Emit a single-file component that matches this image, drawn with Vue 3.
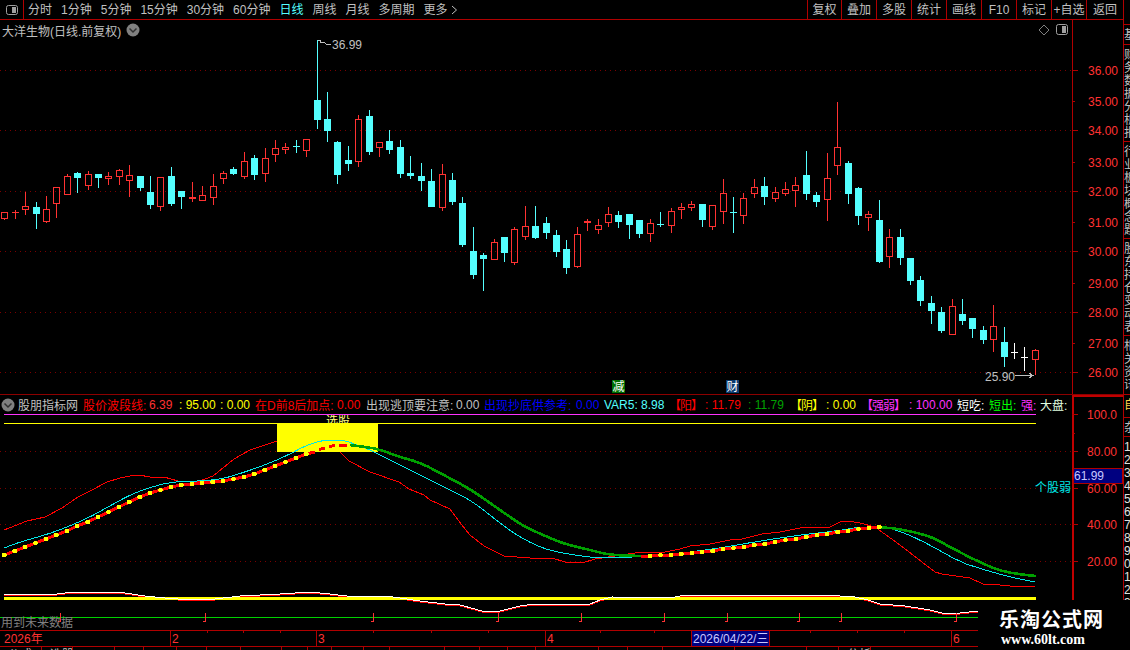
<template>
  <div class="terminal">
    <div class="main-col">
      <!-- top toolbar -->
      <div class="toolbar">
        <div class="panel-btn">
          <svg width="14" height="12" viewBox="0 0 14 12"><rect x="1.5" y="1.5" width="11" height="9" rx="2" class="ico-box" /><rect x="7" y="3" width="4" height="6" class="ico-fill" /></svg>
        </div>
        <div class="periods">
          <span v-for="p in periods" :key="p" :class="{ active: p === '日线' }">{{ p }}</span>
          <span class="more">更多
            <svg width="7" height="10" viewBox="0 0 7 10"><path d="M1 1 L5.5 5 L1 9" class="chev" /></svg>
          </span>
        </div>
        <div class="tools">
          <span v-for="t in tools" :key="t" class="tool">{{ t }}</span>
        </div>
      </div>

      <!-- kline pane -->
      <div class="pane pane-main">
        <div class="chart-wrap">
          <svg class="chart" width="1072" height="374" viewBox="0 20 1072 374">
            <line v-for="y in mainGrid" :key="y" x1="0" x2="1072" :y1="y + 0.5" :y2="y + 0.5" class="grid" />
            <template v-for="c in candles" :key="c.i">
              <path :d="c.wick" :class="'wick-' + c.type" />
              <rect v-if="c.kind === 'solid'" :x="c.x - 3" :y="c.top" width="7" :height="c.h" class="body-c" />
              <rect v-if="c.kind === 'hollow'" :x="c.x - 2.5" :y="c.top + 0.5" width="6" :height="c.h" class="body-r" />
            </template>
            <path d="M317.5 40 H320 M320 40 V43 M320 42.5 H324 L327 44.5 H331" class="note-line" />
            <text x="332" y="49" class="note">36.99</text>
            <text x="985" y="381" class="note">25.90</text>
            <path d="M1015 375.5 H1033 M1029 373 L1033 375.5 L1029 378" class="note-line" />
            <rect x="612" y="380" width="13" height="13" class="tag-green" />
            <text x="612.5" y="391" class="tag-text">减</text>
            <rect x="726" y="380" width="13" height="13" class="tag-navy" />
            <text x="726.5" y="391" class="tag-text">财</text>
          </svg>
          <div class="title-row">
            <span>大洋生物(日线.前复权)</span>
            <svg width="14" height="14" viewBox="0 0 14 14"><circle cx="7" cy="7" r="6.5" class="round" /><path d="M3.5 5.5 L7 9 L10.5 5.5" class="round-chev" /></svg>
          </div>
          <div class="corner-icons">
            <svg width="12" height="12" viewBox="0 0 12 12"><path d="M6 1 L11 6 L6 11 L1 6 Z" class="diamond" /></svg>
            <svg width="13" height="12" viewBox="0 0 13 12"><rect x="0.5" y="0.5" width="11" height="10" rx="2" class="ico-box" /><rect x="6" y="2" width="4" height="7" class="ico-fill" /></svg>
          </div>
        </div>
        <svg class="axis" width="51" height="374" viewBox="0 20 51 374">
          <line x1="0.5" x2="0.5" y1="20" y2="394" class="axis-line" />
          <template v-for="(l, n) in mainAxis" :key="l.t">
            <line x1="0" :x2="n % 2 === 0 ? 6 : 3" :y1="l.y + 0.5" :y2="l.y + 0.5" class="axis-line" />
            <text x="16" :y="l.y + 5" class="axis-text">{{ l.t }}</text>
          </template>
        </svg>
      </div>

      <!-- indicator pane -->
      <div class="pane pane-sub">
        <div class="sub-left">
          <div class="sub-head">
            <svg class="head-ico" width="14" height="14" viewBox="0 0 14 14"><circle cx="7" cy="7" r="6.5" class="round" /><path d="M3.5 5.5 L7 9 L10.5 5.5" class="round-chev" /></svg>
            <span v-for="(f, n) in fields" :key="n" :class="f.c" :style="{ width: f.w + 'px' }">{{ f.t }}</span>
          </div>
          <svg class="chart" width="1072" height="216" viewBox="0 414 1072 216">
            <clipPath id="pickClip"><rect x="300" y="415" width="80" height="8" /></clipPath>
            <line v-for="y in subGrid" :key="y" x1="0" x2="1072" :y1="y + 0.5" :y2="y + 0.5" class="grid" />
            <polyline :points="thinRed" class="thin-red" />
            <line x1="4" x2="1036" y1="414.5" y2="414.5" class="ln-magenta" />
            <line x1="4" x2="1036" y1="423.5" y2="423.5" class="ln-yellow" />
            <text x="326" y="425" class="pick-text" clip-path="url(#pickClip)">选股</text>
            <rect x="277" y="423" width="101" height="29" class="block-yellow" />
            <polyline :points="cyanLine" class="thin-cyan" />
            <polyline :points="greenA" class="thick-green" />
            <polyline :points="greenB" class="thick-green" />
            <polyline :points="redA" class="thick-red" />
            <polyline :points="redB" class="thick-red" />
            <path d="M319 449.5 L325 448 M329 446.5 L335 445.5 M339 445 H347" class="thick-red" />
            <circle v-for="d in dots" :key="d[0]" :cx="d[0]" :cy="d[1]" r="2.4" class="dot" />
            <polyline :points="waveShadow" class="wave-red" />
            <line x1="4" x2="1036" y1="598" y2="598" class="ln-yellow-thick" />
            <polyline :points="wave" class="wave-white" />
            <line x1="0" x2="978" y1="617.5" y2="617.5" class="ln-green" />
            <path v-for="m in marks" :key="m" :d="'M' + m + '.5 613 V621 H' + (m - 2)" class="mark" />
            <text x="1" y="627" class="future">用到未来数据</text>
          </svg>
        </div>
        <svg class="axis" width="51" height="235" viewBox="0 395 51 235">
          <rect x="0" y="395" width="2" height="235" class="axis-fill" />
          <rect x="0" y="395" width="51" height="2" class="axis-fill" />
          <line x1="0" x2="3" y1="433.5" y2="433.5" class="axis-line" />
          <template v-for="l in subAxis" :key="l.t">
            <line x1="0" x2="6" :y1="l.y + 0.5" :y2="l.y + 0.5" class="axis-line" />
            <text x="15" :y="l.y + 5" class="axis-text">{{ l.t }}</text>
          </template>
          <rect x="1.5" y="468.5" width="49" height="15" class="value-box" />
          <text x="2" y="480" class="value-text">61.99</text>
        </svg>
        <span class="weak-tag">个股弱</span>
      </div>

      <!-- date strip -->
      <svg class="dates" width="1123" height="17" viewBox="0 630 1123 17">
        <line x1="0" x2="1123" y1="630.5" y2="630.5" class="axis-line" />
        <line x1="0" x2="1123" y1="646.5" y2="646.5" class="axis-line" />
        <line v-for="t in dateTicks" :key="t" :x1="t + 0.5" :x2="t + 0.5" y1="630" y2="633" class="axis-line" />
        <text x="4" y="643" class="axis-text">2026年</text>
        <template v-for="m in months" :key="m.t">
          <line :x1="m.x + 0.5" :x2="m.x + 0.5" y1="630" y2="646" class="axis-line" />
          <text :x="m.x + 2" y="643" class="axis-text">{{ m.t }}</text>
        </template>
        <rect x="691.5" y="630.5" width="78" height="16" class="value-box" />
        <text x="693" y="643" class="value-text">2026/04/22/三</text>
      </svg>

      <!-- bottom tabs, cut by the window -->
      <div class="tabs">
        <span v-for="(t, n) in tabs" :key="n" class="tab" :style="{ width: t.w + 'px' }">{{ t.t }}</span>
      </div>
    </div>

    <!-- clipped side strip -->
    <div class="side">
      <div v-for="(s, n) in sideCells" :key="n" class="side-cell" :class="s.c" :style="{ height: s.h + 'px' }">
        <div class="side-text">{{ s.t }}</div>
      </div>
    </div>

    <div class="watermark">
      <div class="wm-cn">乐淘公式网</div>
      <div class="wm-en">www.60lt.com</div>
    </div>
  </div>
</template>

<script setup>
const periods = ['分时', '1分钟', '5分钟', '15分钟', '30分钟', '60分钟', '日线', '周线', '月线', '多周期']
const tools = ['复权', '叠加', '多股', '统计', '画线', 'F10', '标记', '+自选', '返回']

const mainGrid = [70, 130, 191, 251, 312, 372]
const subGrid = [451, 488, 524, 561]
const mainAxis = [
  { t: '36.00', y: 70 }, { t: '35.00', y: 101 }, { t: '34.00', y: 130 }, { t: '33.00', y: 162 },
  { t: '32.00', y: 191 }, { t: '31.00', y: 222 }, { t: '30.00', y: 251 }, { t: '29.00', y: 283 },
  { t: '28.00', y: 312 }, { t: '27.00', y: 343 }, { t: '26.00', y: 372 }
]
const subAxis = [
  { t: '100.0', y: 414 }, { t: '80.00', y: 451 }, { t: '60.00', y: 488 },
  { t: '40.00', y: 524 }, { t: '20.00', y: 561 }
]

// type, wick top, body top, body bottom, wick bottom
const raw = [
  ['r',212,212,219,220],['r',210,212,213,219],['r',192,206,210,215],['c',202,207,214,229],['r',196,209,222,223],
  ['r',187,187,204,218],['r',174,176,195,195],['c',172,173,178,193],['r',171,174,186,190],['c',174,174,178,188],
  ['r',172,176,179,185],['r',169,170,177,185],['r',165,175,181,197],['c',176,176,188,191],['c',176,192,205,209],
  ['r',177,177,207,211],['c',167,176,204,206],['c',191,191,197,209],['r',182,197,199,202],['r',186,195,201,201],
  ['r',174,186,198,205],['r',171,173,179,184],['c',167,169,174,175],['r',152,161,177,179],['c',155,158,175,180],
  ['r',148,158,174,182],['r',140,148,155,162],['r',143,147,150,154],['c',140,146,147,153],['r',139,139,151,157],
  ['c',40,100,120,129],['c',92,119,131,142],['c',141,142,175,184],['c',146,160,164,171],['r',115,119,162,167],
  ['c',110,116,152,155],['r',142,142,148,157],['c',130,141,150,154],['c',140,147,174,178],['c',156,173,176,179],
  ['c',163,176,181,191],['c',169,181,207,207],['r',164,174,208,211],['c',173,180,202,205],['c',197,203,245,247],
  ['c',227,251,275,279],['c',253,255,259,291],['r',239,242,260,260],['c',237,237,253,262],['r',227,229,263,265],
  ['r',206,226,237,240],['c',206,226,238,239],['c',217,223,233,239],['c',230,235,252,257],['c',240,249,268,274],
  ['r',227,234,267,268],['r',219,221,223,231],['r',219,225,230,234],['r',207,214,223,227],['c',211,215,222,228],
  ['c',214,214,225,239],['c',220,220,234,238],['r',219,223,234,242],['c',212,224,225,227],['r',208,211,226,233],
  ['r',203,207,210,219],['r',201,204,208,211],['c',204,204,220,227],['r',205,205,227,230],['r',179,193,212,224],
  ['c',197,212,213,233],['r',193,198,216,224],['r',179,187,194,198],['c',177,186,197,205],['r',187,192,199,202],
  ['r',182,189,194,196],['r',177,185,191,207],['c',151,175,194,200],['c',192,195,202,207],['r',153,178,200,221],
  ['r',102,147,166,175],['c',161,163,194,204],['c',187,188,216,225],['r',211,214,218,231],['c',200,220,262,263],
  ['r',229,237,257,268],['c',229,237,258,265],['c',258,258,281,285],['c',276,280,301,306],['c',296,303,311,324],
  ['c',307,312,331,333],['r',299,306,335,335],['c',299,314,321,325],['c',318,318,329,338],['c',326,330,340,344],
  ['r',305,326,340,352],['c',327,342,357,367],['w',343,352,353,359],['w',347,357,358,371],['r',349,350,360,375]
]

const barX = (i) => 4.3 + 10.417 * i

const candles = raw.map(([type, wt, bt, bb, wb], i) => {
  const x = Math.round(4.3 + 10.41 * i)
  const doji = bb - bt <= 1
  let wick = `M${x + 0.5} ${wt} V${bt} M${x + 0.5} ${bb} V${wb}`
  if (doji) wick = `M${x + 0.5} ${wt} V${wb} M${x - 3} ${bt + 0.5} H${x + 4}`
  let kind = 'none'
  if (!doji) kind = type === 'c' ? 'solid' : 'hollow'
  return { i, x, type, wick, kind, top: bt, h: kind === 'solid' ? bb - bt : bb - bt - 1 }
})

const pts = (list) => list.map((p) => p.join(',')).join(' ')

// corner cutting, the hand-read points are sparse
const smooth = (list, rounds = 2) => {
  let cur = list
  for (let r = 0; r < rounds; r++) {
    const next = [cur[0]]
    for (let i = 0; i < cur.length - 1; i++) {
      const [ax, ay] = cur[i]
      const [bx, by] = cur[i + 1]
      next.push([ax * 0.75 + bx * 0.25, ay * 0.75 + by * 0.25])
      next.push([ax * 0.25 + bx * 0.75, ay * 0.25 + by * 0.75])
    }
    next.push(cur[cur.length - 1])
    cur = next
  }
  return cur
}

const thinRed = pts([
  [4,530],[27,521],[45,517],[62,508],[78,497],[92,490],[107,482],[120,478],[130,476],[139,475],[150,477],[164,477],
  [178,481],[200,481],[213,476],[234,459],[250,450],[277,441],[300,436],[325,438],[340,452],[349,461],[370,472],
  [399,482],[409,489],[424,495],[430,500],[450,509],[461,524],[470,535],[484,546],[504,556],[530,558],[552,558],
  [565,562],[582,563],[595,559],[615,556],[635,553],[665,552],[680,549],[690,546],[710,544],[730,540],[742,539],
  [762,534],[780,532],[800,528],[830,527],[840,522],[848,521],[860,523],[875,527],[900,545],[922,562],[935,572],
  [942,574],[970,578],[983,584],[1000,585],[1020,587],[1035,586]
])
const cyanLine = pts(smooth([
  [4,548],[20,542],[45,535],[65,528],[90,517],[108,507],[128,496],[145,489],[170,482],[200,481],[222,479],[245,472],
  [270,463],[290,454],[305,446],[320,441],[330,440],[343,440],[360,446],[370,450],[400,465],[430,480],[450,490],
  [472,501],[500,523],[515,534],[535,545],[552,551],[580,556],[600,558],[635,557],[670,555],[690,552],[720,548],
  [760,541],[800,535],[836,531],[860,527],[885,527],[905,533],[930,545],[960,562],[985,570],[1010,577],[1035,582]
], 1))

const dotsA = [
  405,393,381,369,357,345,333,318,306,291,276,261,246,231,219,210,201,195,192,189,186,183,177,171,162,150,138,126,114,102
].map((py, i) => [barX(i), 420 + py / 3])
const dotsB = [
  378,375,375,372,369,366,363,357,354,351,345,342,336,330,327,321,315,312,306,303,297,294,291
].map((py, i) => [barX(i + 62), 430 + py / 3])

const dots = [...dotsA, ...dotsB]
const redA = pts([...dotsA, [315, 452]])
const redB = pts([[641, 556], ...dotsB])
const greenA = pts(smooth([
  [350,445],[365,447],[378,449],[400,457],[421,463],[440,473],[470,489],[490,503],[510,517],[525,527],[550,538],
  [565,544],[590,550],[610,555],[641,556]
]))
const greenB = pts(smooth([
  [879,527],[900,529],[930,536],[950,547],[975,560],[1000,571],[1025,575],[1036,576]
]))

const waveList = [
  [4,594],[30,594],[50,595],[72,592],[105,592],[125,593],[145,596],[165,598],[190,600],[215,599],[240,596],[280,594],
  [310,592],[330,594],[355,597],[385,596],[400,598],[420,601],[445,604],[460,605],[475,609],[485,612],[500,611],
  [520,606],[535,604],[565,604],[590,604],[600,600],[612,597],[670,598],[680,596],[695,595],[760,595],[810,595],
  [840,596],[855,597],[868,600],[880,604],[905,606],[930,610],[942,613],[960,613],[978,611]
]
const wave = pts(waveList)
const waveShadow = pts(waveList.map(([x, y]) => [x, y + 1]))

const marks = [60, 205, 373, 498, 581, 664, 727, 799, 841, 956]
const dateTicks = [207, 243, 280, 373, 431, 488, 600, 654, 810, 857, 904]
const months = [{ t: '2', x: 170 }, { t: '3', x: 316 }, { t: '4', x: 545 }, { t: '6', x: 951 }]

const fields = [
  { t: '股朋指标网', w: 65, c: 'gray' },
  { t: '股价波段线:', w: 66, c: 'red' },
  { t: '6.39', w: 30, c: 'soft-red' },
  { t: ': 95.00', w: 41, c: 'yellow' },
  { t: ': 0.00', w: 35, c: 'yellow' },
  { t: '在D前8后加点:', w: 82, c: 'red' },
  { t: '0.00', w: 29, c: 'red' },
  { t: '出现逃顶要注意:', w: 90, c: 'gray' },
  { t: '0.00', w: 28, c: 'gray' },
  { t: '出现抄底供参考:', w: 92, c: 'blue' },
  { t: '0.00', w: 28, c: 'blue' },
  { t: 'VAR5:', w: 37, c: 'cyan' },
  { t: '8.98', w: 32, c: 'cyan' },
  { t: '【阳】', w: 32, c: 'red tight' },
  { t: ': 11.79', w: 43, c: 'red' },
  { t: ': 11.79', w: 46, c: 'green' },
  { t: '【阴】', w: 32, c: 'yellow tight' },
  { t: ': 0.00', w: 39, c: 'yellow' },
  { t: '【强弱】', w: 44, c: 'magenta tight' },
  { t: ': 100.00', w: 48, c: 'magenta' },
  { t: '短吃:', w: 32, c: 'white' },
  { t: '短出:', w: 32, c: 'lime' },
  { t: '强:', w: 19, c: 'magenta' },
  { t: '大盘:', w: 32, c: 'pale' }
]

const tabs = [
  { t: '公式', w: 42 }, { t: '选股', w: 31 }, { t: '', w: 42 }, { t: '', w: 29 }, { t: '', w: 33 }, { t: '', w: 30 },
  { t: '', w: 34 }, { t: '', w: 41 }, { t: '', w: 26 }, { t: '', w: 24 }, { t: '', w: 32 }, { t: '', w: 26 },
  { t: '', w: 55 }, { t: '', w: 35 }, { t: '', w: 28 }, { t: '', w: 28 }, { t: '', w: 63 }, { t: '', w: 29 },
  { t: '', w: 35 }, { t: '', w: 72 }, { t: '', w: 72 }, { t: '', w: 32 }, { t: '分析', w: 32 }
]

const sideCells = [
  { h: 25, t: '' },
  { h: 20, t: '基' },
  { h: 97, t: '财务数据分析报' },
  { h: 97, t: '行业板块概念题' },
  { h: 97, t: '股东持仓变动表' },
  { h: 59, t: '相关资讯' },
  { h: 23, t: '自', c: 'amber' },
  { h: 19, t: '杂' },
  { h: 213, t: '1234567890123', c: 'nums' }
]
</script>

<style scoped>
.terminal {
  position: relative;
  display: flex;
  width: 1130px;
  height: 650px;
  overflow: hidden;
  background: #000;
  color: #c0c0c0;
  font-family: "Liberation Sans", "Noto Sans CJK SC", sans-serif;
  font-size: 12px;
}

.main-col {
  display: flex;
  flex-direction: column;
  width: 1123px;
  flex: none;
}

.toolbar {
  display: flex;
  align-items: stretch;
  height: 19px;
  border-bottom: 1px solid #b00000;
  flex: none;
  line-height: 20px;
}

.panel-btn {
  display: flex;
  align-items: center;
  justify-content: center;
  width: 23px;
  border-right: 1px solid #b00000;
}

.ico-box {
  fill: none;
  stroke: #a0a0a0;
}

.ico-fill {
  fill: #a0a0a0;
}

.chev {
  fill: none;
  stroke: #c0c0c0;
}

.periods {
  display: flex;
  gap: 9px;
  padding-left: 4px;
}

.periods .active {
  color: #54ffff;
}

.more {
  display: flex;
  align-items: center;
  gap: 3px;
}

.tools {
  display: flex;
  margin-left: auto;
}

.tool {
  width: 34px;
  border-left: 1px solid #b00000;
  text-align: center;
}

.tool:first-child {
  width: 33px;
}

.tool:last-child {
  width: 36px;
}

.pane {
  display: flex;
  position: relative;
  flex: none;
}

.pane-main {
  height: 374px;
}

.chart-wrap {
  position: relative;
  width: 1072px;
  height: 374px;
}

.chart,
.axis,
.dates {
  display: block;
  flex: none;
  shape-rendering: crispEdges;
}

.title-row {
  position: absolute;
  top: 0;
  left: 2px;
  display: flex;
  align-items: center;
  gap: 5px;
  height: 20px;
}

.corner-icons {
  position: absolute;
  top: 4px;
  right: 3px;
  display: flex;
  align-items: center;
  gap: 6px;
}

.diamond {
  fill: none;
  stroke: #808080;
}

.round {
  fill: #808080;
}

.round-chev {
  fill: none;
  stroke: #303030;
  stroke-width: 1.5;
}

.grid {
  stroke: #7a0000;
  stroke-dasharray: 1 4;
  shape-rendering: auto;
}

.wick-r,
.body-r {
  fill: none;
  stroke: #ff3232;
}

.wick-c {
  fill: none;
  stroke: #54ffff;
}

.wick-w {
  fill: none;
  stroke: #fff;
}

.body-c {
  fill: #54ffff;
}

.note {
  fill: #c0c0c0;
}

.note-line {
  fill: none;
  stroke: #c0c0c0;
}

.tag-green {
  fill: #006e00;
}

.tag-navy {
  fill: #0b3a6e;
}

.tag-text {
  fill: #fff;
}

.axis-line {
  stroke: #b00000;
}

.axis-fill {
  fill: #c00000;
}

.axis-text {
  fill: #ff3232;
}

.value-box {
  fill: #000080;
  stroke: #b00000;
}

.value-text {
  fill: #c8c8ff;
}

.pane-sub {
  height: 236px;
  border-top: 1px solid #8c0000;
  box-sizing: border-box;
}

.sub-left {
  display: flex;
  flex-direction: column;
  width: 1072px;
}

.sub-head {
  display: flex;
  align-items: center;
  height: 19px;
  flex: none;
  padding-left: 1px;
  white-space: nowrap;
  overflow: hidden;
}

.head-ico {
  flex: none;
  margin-right: 3px;
}

.sub-head span {
  flex: none;
}

.sub-head .tight {
  letter-spacing: -1px;
  text-indent: -4px;
}

.gray { color: #c0c0c0; }
.red { color: #ff0000; }
.soft-red { color: #ff3232; }
.yellow { color: #ffff00; }
.blue { color: #0000ff; }
.cyan { color: #54ffff; }
.green { color: #00a000; }
.magenta { color: #ff32ff; }
.white { color: #fff; }
.lime { color: #00ff00; }
.pale { color: #e0ffe0; }

.thin-red {
  fill: none;
  stroke: #ff0000;
}

.thin-cyan {
  fill: none;
  stroke: #00e8e8;
}

.thick-red {
  fill: none;
  stroke: #ff0000;
  stroke-width: 3;
}

.thick-green {
  fill: none;
  stroke: #00a000;
  stroke-width: 2.6;
}

.dot {
  fill: #ffff00;
}

.ln-magenta {
  stroke: #ff32ff;
}

.ln-yellow {
  stroke: #ffff00;
}

.ln-yellow-thick {
  stroke: #ffff00;
  stroke-width: 3;
}

.block-yellow {
  fill: #ffff00;
}

.pick-text {
  fill: #ffff80;
}

.wave-red {
  fill: none;
  stroke: #ff0000;
}

.wave-white {
  fill: none;
  stroke: #fff;
}

.ln-green {
  stroke: #00d000;
}

.mark {
  fill: none;
  stroke: #ff3232;
}

.future {
  fill: #808080;
}

.weak-tag {
  position: absolute;
  top: 86px;
  left: 1035px;
  color: #00e8e8;
  line-height: 14px;
}

.tabs {
  display: flex;
  height: 3px;
  overflow: hidden;
  flex: none;
}

.tab {
  flex: none;
  box-sizing: border-box;
  height: 3px;
  padding: 1px 0 0 8px;
  border-right: 1px solid #b00000;
  line-height: 14px;
  overflow: hidden;
  white-space: nowrap;
}

.side {
  width: 7px;
  flex: none;
  box-sizing: border-box;
  border-left: 1px solid #b00000;
  overflow: hidden;
}

.side-cell {
  box-sizing: border-box;
  border-bottom: 1px solid #b00000;
  overflow: hidden;
}

.side-text {
  width: 13px;
  padding-top: 4px;
  line-height: 13px;
  word-break: break-all;
}

.amber {
  color: #ffd24a;
}

.nums {
  border-bottom: 0;
  color: #e0e0e0;
}

.watermark {
  position: absolute;
  top: 600px;
  left: 978px;
  width: 152px;
  height: 50px;
  background: #000;
  color: #fff;
  text-align: left;
}

.wm-cn {
  margin: 8px 0 0 21px;
  font-family: "Noto Sans CJK SC", sans-serif;
  font-size: 20px;
  font-weight: 700;
  line-height: 22px;
  letter-spacing: 1px;
}

.wm-en {
  margin: 2px 0 0 23px;
  font-family: "Liberation Serif", serif;
  font-size: 14px;
  font-weight: 700;
  line-height: 15px;
}
</style>

<style>
html,
body {
  margin: 0;
  background: #000;
  overflow: hidden;
}
</style>
